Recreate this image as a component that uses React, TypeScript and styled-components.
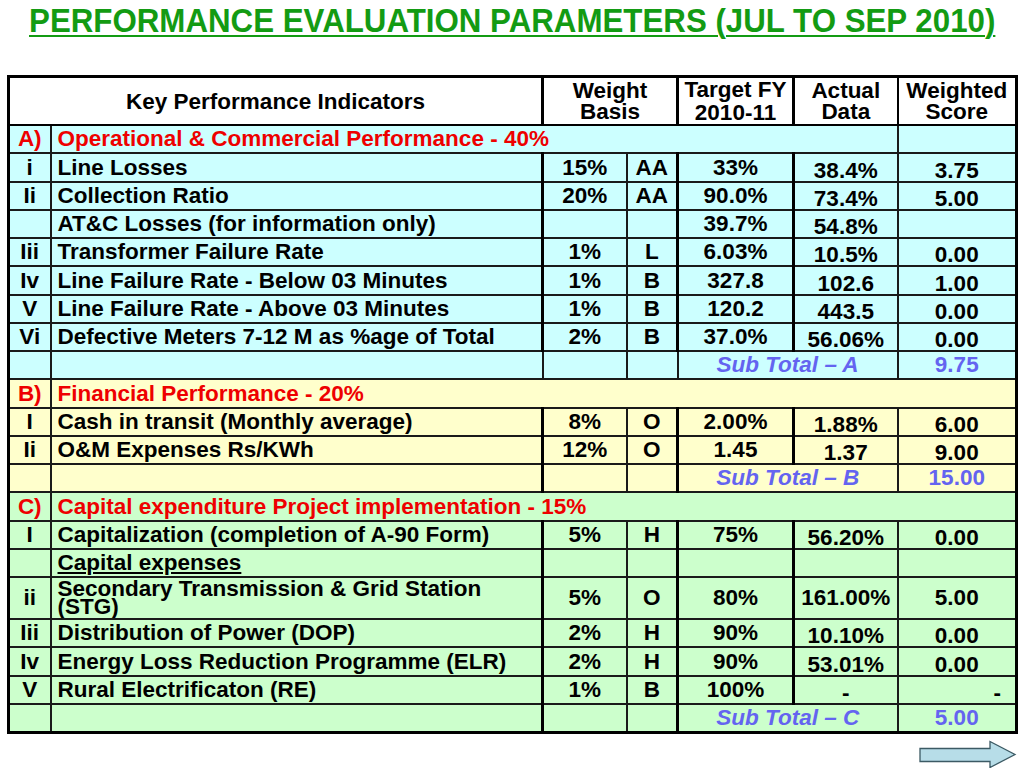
import React from "react";
import styled, { createGlobalStyle } from "styled-components";

const GlobalStyle = createGlobalStyle`
  html, body { margin: 0; padding: 0; background: #ffffff; }
  body { font-family: "Liberation Sans", Arial, sans-serif; }
`;

type Tone = "cyan" | "yellow" | "green";
const toneBg: Record<Tone, string> = {
  cyan: "#ccffff",
  yellow: "#ffffcc",
  green: "#ccffcc",
};

type Item = {
  kind: "item";
  no: string;
  text: string;
  weight: string;
  basis: string;
  target: string;
  actual: string;
  score: string;
  tall?: boolean;
  underline?: boolean;
  scoreRight?: boolean;
};
type Section = { kind: "section"; label: string; text: string; split?: boolean };
type SubTotal = { kind: "subtotal"; label: string; value: string; thin?: boolean };
type Row = (Item | Section | SubTotal) & { tone: Tone };

const item = (
  tone: Tone,
  no: string,
  text: string,
  weight: string,
  basis: string,
  target: string,
  actual: string,
  score: string,
  extra: Partial<Item> = {}
): Row => ({ kind: "item", tone, no, text, weight, basis, target, actual, score, ...extra });

const rows: Row[] = [
  { kind: "section", tone: "cyan", label: "A)", text: "Operational & Commercial Performance - 40%", split: true },
  item("cyan", "i", "Line Losses", "15%", "AA", "33%", "38.4%", "3.75"),
  item("cyan", "Ii", "Collection Ratio", "20%", "AA", "90.0%", "73.4%", "5.00"),
  item("cyan", "", "AT&C Losses (for information only)", "", "", "39.7%", "54.8%", ""),
  item("cyan", "Iii", "Transformer Failure Rate", "1%", "L", "6.03%", "10.5%", "0.00"),
  item("cyan", "Iv", "Line Failure Rate - Below 03 Minutes", "1%", "B", "327.8", "102.6", "1.00"),
  item("cyan", "V", "Line Failure Rate - Above 03 Minutes", "1%", "B", "120.2", "443.5", "0.00"),
  item("cyan", "Vi", "Defective Meters 7-12 M as %age of Total", "2%", "B", "37.0%", "56.06%", "0.00"),
  { kind: "subtotal", tone: "cyan", label: "Sub Total \u2013 A", value: "9.75", thin: true },
  { kind: "section", tone: "yellow", label: "B)", text: "Financial Performance - 20%" },
  item("yellow", "I", "Cash in transit (Monthly average)", "8%", "O", "2.00%", "1.88%", "6.00"),
  item("yellow", "Ii", "O&M Expenses Rs/KWh", "12%", "O", "1.45", "1.37", "9.00"),
  { kind: "subtotal", tone: "yellow", label: "Sub Total \u2013 B", value: "15.00" },
  { kind: "section", tone: "green", label: "C)", text: "Capital expenditure Project implementation - 15%" },
  item("green", "I", "Capitalization (completion of A-90 Form)", "5%", "H", "75%", "56.20%", "0.00"),
  item("green", "", "Capital expenses", "", "", "", "", "", { underline: true }),
  item("green", "ii", "Secondary Transmission & Grid Station (STG)", "5%", "O", "80%", "161.00%", "5.00", { tall: true }),
  item("green", "Iii", "Distribution of Power (DOP)", "2%", "H", "90%", "10.10%", "0.00"),
  item("green", "Iv", "Energy Loss Reduction Programme (ELR)", "2%", "H", "90%", "53.01%", "0.00"),
  item("green", "V", "Rural Electrificaton (RE)", "1%", "B", "100%", "-", "-", { scoreRight: true }),
  { kind: "subtotal", tone: "green", label: "Sub Total \u2013 C", value: "5.00" },
];

const colWidths = [42, 492, 84, 51, 116, 104, 119];

/* spread the fractional row pitch of the sheet over whole pixels */
const PITCH = 28.25;
const TALL = 42;
const rowHeights: number[] = (() => {
  const out: number[] = [];
  let acc = 0;
  let prev = 0;
  rows.forEach((r) => {
    if (r.kind === "item" && r.tall) {
      out.push(TALL);
      return;
    }
    acc += PITCH;
    const cur = Math.round(acc);
    out.push(cur - prev);
    prev = cur;
  });
  return out;
})();

const Page = styled.div`
  width: 1024px;
  height: 768px;
  display: flex;
  flex-direction: column;
  overflow: hidden;
`;

const Title = styled.h1`
  margin: 0;
  padding-top: 3px;
  height: 39px;
  display: flex;
  justify-content: center;
`;

const TitleText = styled.span`
  display: inline-block;
  font-family: "Liberation Sans", Arial, sans-serif;
  font-weight: 700;
  font-size: 34px;
  line-height: 34px;
  color: #139b13;
  text-decoration: underline;
  text-decoration-thickness: 2px;
  text-underline-offset: 3px;
  white-space: nowrap;
  transform: scaleX(0.92);
  transform-origin: center;
`;

const Sheet = styled.table`
  margin: 38px 0 0 7px;
  width: 1009px;
  table-layout: fixed;
  border-collapse: collapse;
  border: 3px solid #000;
  font-family: "Liberation Sans", Arial, sans-serif;
  font-weight: 700;
  font-size: 22.5px;
  color: #000;
`;

const Tr = styled.tr<{ $bg: string; $h: number }>`
  background: ${(p) => p.$bg};
  height: ${(p) => p.$h}px;
`;

const Th = styled.th<{ $thick?: boolean; $top?: boolean }>`
  padding: 0;
  border: 2px solid #000;
  border-left-width: ${(p) => (p.$thick ? 3 : 2)}px;
  font-weight: 700;
  font-size: 22.5px;
  line-height: ${(p) => (p.$top ? 23 : 21)}px;
  vertical-align: ${(p) => (p.$top ? "top" : "middle")};
  text-align: center;
  background: #ffffff;
`;

const Td = styled.td<{
  $align?: "left" | "center" | "right";
  $thick?: boolean;
  $low?: boolean;
  $color?: string;
  $italic?: boolean;
}>`
  padding: ${(p) => (p.$low ? "6px" : "0")} ${(p) => (p.$align === "right" ? "14px" : "0")} 0
    ${(p) => (p.$align === "left" ? "6px" : "0")};
  border: 2px solid #1a1a1a;
  border-left-width: ${(p) => (p.$thick ? 3 : 1)}px;
  border-left-color: #000;
  text-align: ${(p) => p.$align ?? "center"};
  vertical-align: middle;
  line-height: 20px;
  white-space: nowrap;
  color: ${(p) => p.$color ?? "#000"};
  font-style: ${(p) => (p.$italic ? "italic" : "normal")};
  overflow: hidden;
`;

const WrapText = styled.div`
  white-space: normal;
  line-height: 18px;
  padding-right: 20px;
`;

const Under = styled.span`
  text-decoration: underline;
  text-underline-offset: 2px;
`;

const Footer = styled.div`
  display: flex;
  justify-content: flex-end;
  padding: 6px 7px 0 0;
`;

const RED = "#ee0000";
const BLUE = "#6464f0";

function Arrow() {
  return (
    <svg width="98" height="30" viewBox="0 0 98 30" aria-hidden>
      <polygon
        points="1,8.5 71,8.5 71,1.5 96,14.5 71,27.5 71,21.5 1,21.5"
        fill="#b7dde8"
        stroke="#3c5a64"
        strokeWidth="1.3"
        strokeLinejoin="miter"
      />
    </svg>
  );
}

function renderRow(r: Row, i: number) {
  const bg = toneBg[r.tone];
  const h = rowHeights[i];
  if (r.kind === "section") {
    return (
      <Tr key={i} $bg={bg} $h={h}>
        <Td $color={RED}>{r.label}</Td>
        {r.split ? (
          <>
            <Td $align="left" colSpan={5} $color={RED}>
              {r.text}
            </Td>
            <Td />
          </>
        ) : (
          <Td $align="left" colSpan={6} $color={RED}>
            {r.text}
          </Td>
        )}
      </Tr>
    );
  }
  if (r.kind === "subtotal") {
    return (
      <Tr key={i} $bg={bg} $h={h}>
        <Td />
        <Td />
        <Td $thick={!r.thin} />
        <Td />
        <Td colSpan={2} $thick={!r.thin} $color={BLUE} $italic>
          {r.label}
        </Td>
        <Td $color={BLUE}>{r.value}</Td>
      </Tr>
    );
  }
  return (
    <Tr key={i} $bg={bg} $h={h}>
      <Td>{r.no}</Td>
      <Td $align="left">
        {r.tall ? <WrapText>{r.text}</WrapText> : r.underline ? <Under>{r.text}</Under> : r.text}
      </Td>
      <Td $thick>{r.weight}</Td>
      <Td>{r.basis}</Td>
      <Td $thick>{r.target}</Td>
      <Td $thick $low={!r.tall}>
        {r.actual}
      </Td>
      <Td $low={!r.tall} $align={r.scoreRight ? "right" : "center"}>
        {r.score}
      </Td>
    </Tr>
  );
}

export default function App() {
  return (
    <Page>
      <GlobalStyle />
      <Title>
        <TitleText>PERFORMANCE EVALUATION PARAMETERS (JUL TO SEP 2010)</TitleText>
      </Title>
      <Sheet>
        <colgroup>
          {colWidths.map((w, i) => (
            <col key={i} style={{ width: w }} />
          ))}
        </colgroup>
        <thead>
          <Tr $bg="#ffffff" $h={48}>
            <Th colSpan={2}>Key Performance Indicators</Th>
            <Th colSpan={2} $thick>
              Weight
              <br />
              Basis
            </Th>
            <Th $thick $top>
              Target FY
              <br />
              2010-11
            </Th>
            <Th $thick>
              Actual
              <br />
              Data
            </Th>
            <Th>
              Weighted
              <br />
              Score
            </Th>
          </Tr>
        </thead>
        <tbody>{rows.map(renderRow)}</tbody>
      </Sheet>
      <Footer>
        <Arrow />
      </Footer>
    </Page>
  );
}
